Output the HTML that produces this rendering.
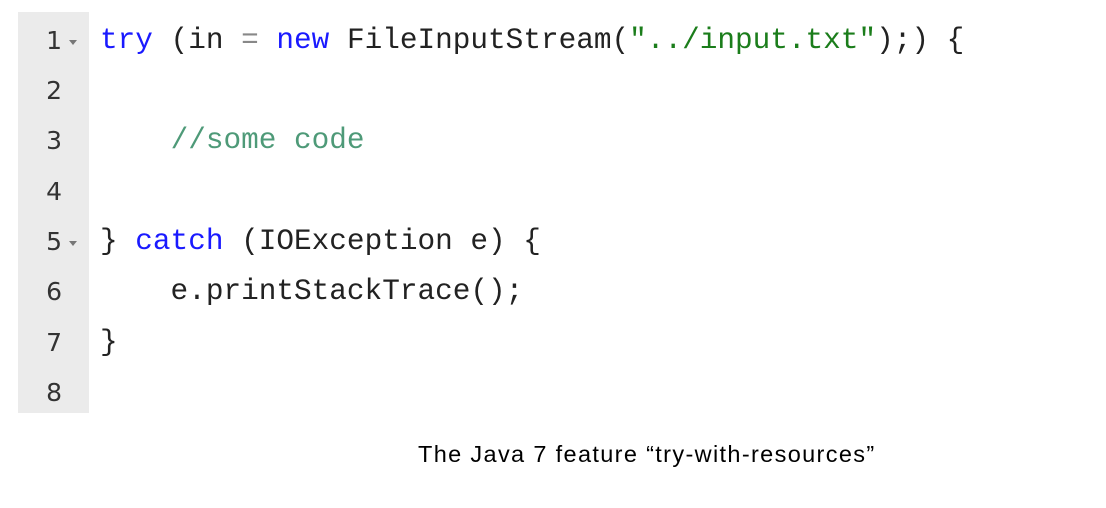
<!DOCTYPE html>
<html><head><style>
body{margin:0;width:1106px;height:508px;background:#fff;position:relative;overflow:hidden}
.g{position:absolute;left:18px;top:12px;width:71px;height:401px;background:#ebebeb}
.n{position:absolute;left:38px;width:24px;text-align:right;font:25px "DejaVu Sans","Liberation Sans",sans-serif;color:#333}
.a{position:absolute;left:69px;width:0;height:0;border-left:4px solid transparent;border-right:4px solid transparent;border-top:5px solid #777}
.c{position:absolute;left:100px;font:29.4px "Liberation Mono",monospace;color:#222;white-space:pre}
.k{color:#1a1aff}.s{color:#1b7d1b}.m{color:#4e9a78}.o{color:#888}
.cap{position:absolute;left:418px;top:441px;font:23.5px "Liberation Sans",sans-serif;color:#000;letter-spacing:1.35px;white-space:nowrap}
</style></head><body>
<div class="g"></div>
<div class="n" style="top:26px">1</div><div class="a" style="top:40px"></div>
<div class="n" style="top:76px">2</div>
<div class="n" style="top:126px">3</div>
<div class="n" style="top:177px">4</div>
<div class="n" style="top:227px">5</div><div class="a" style="top:241px"></div>
<div class="n" style="top:277px">6</div>
<div class="n" style="top:328px">7</div>
<div class="n" style="top:378px">8</div>
<div class="c" style="top:24px"><span class="k">try</span> (in <span class="o">=</span> <span class="k">new</span> FileInputStream(<span class="s">"../input.txt"</span>);) {</div>
<div class="c" style="top:124px">    <span class="m">//some code</span></div>
<div class="c" style="top:225px">} <span class="k">catch</span> (IOException e) {</div>
<div class="c" style="top:275px">    e.printStackTrace();</div>
<div class="c" style="top:326px">}</div>
<div class="cap">The Java 7 feature “try-with-resources”</div>
</body></html>
